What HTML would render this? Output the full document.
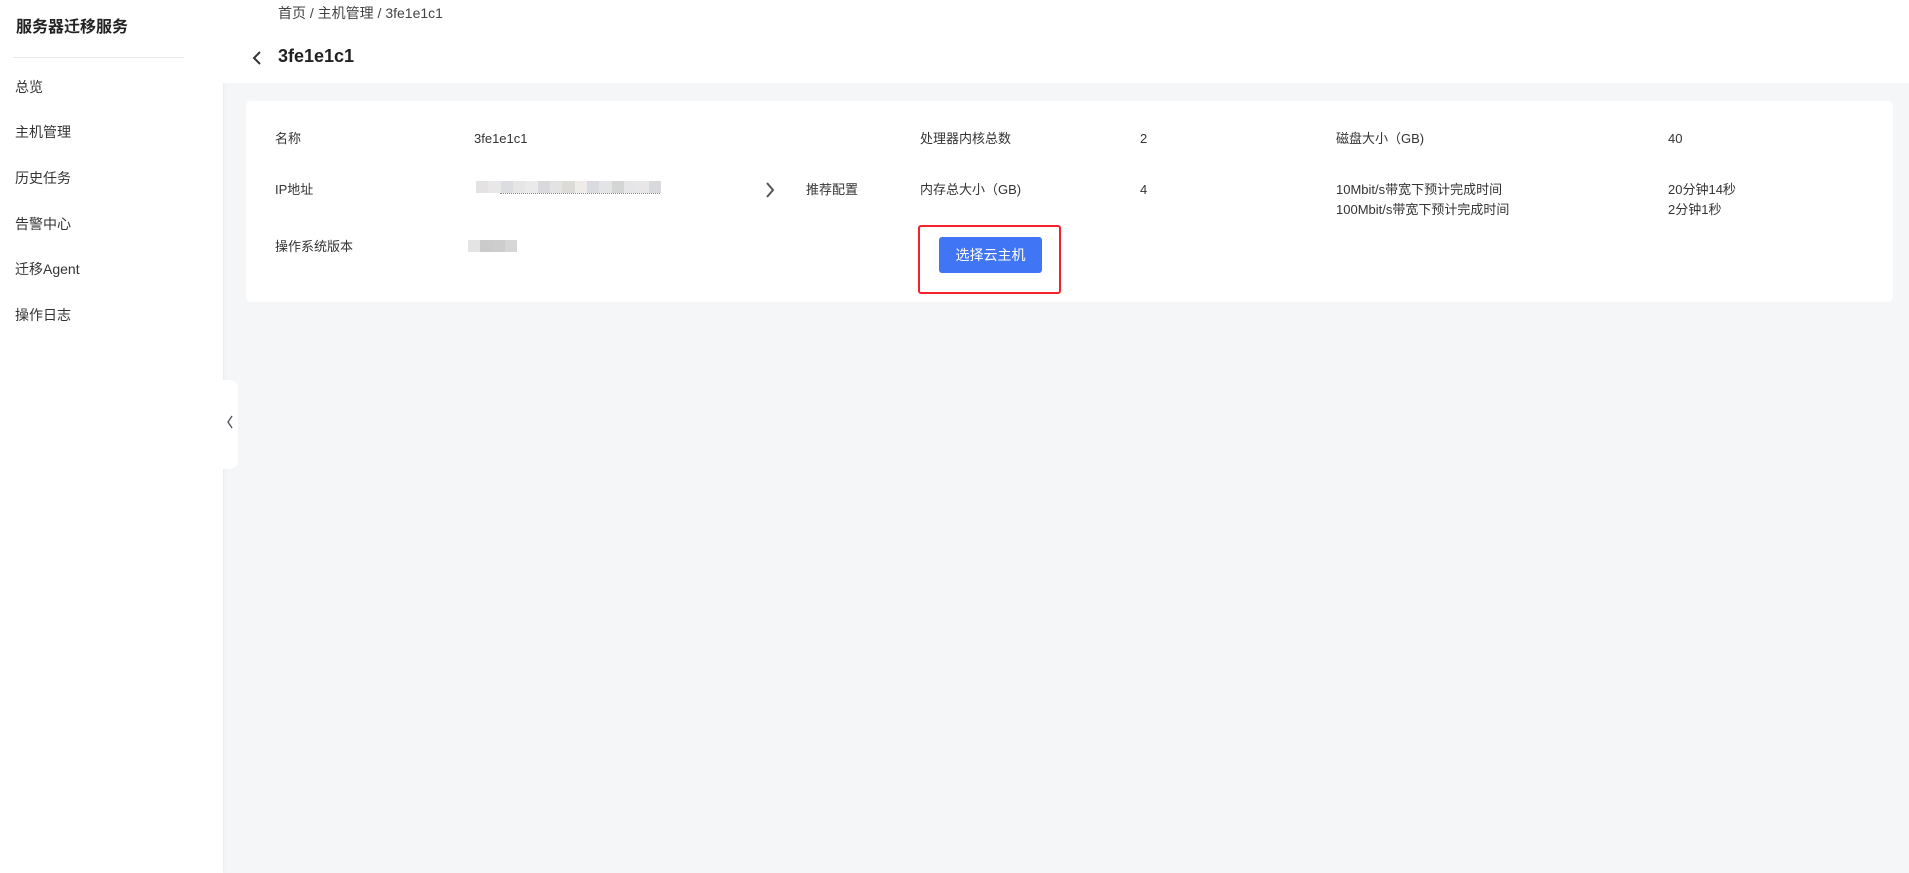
<!DOCTYPE html>
<html><head><meta charset="utf-8"><style>
*{margin:0;padding:0;box-sizing:border-box}
body{width:1909px;height:873px;background:#f5f6f8;font-family:"Liberation Sans","Noto Sans CJK SC",sans-serif;color:#333;font-size:13px;position:relative;overflow:hidden}
.t{position:absolute;line-height:18px;white-space:nowrap}
.side{position:absolute;left:0;top:0;width:223px;height:873px;background:#fff;box-shadow:1px 0 4px rgba(0,0,0,.05)}
.side .title{left:16px;top:17px;font-size:16px;font-weight:bold;color:#222;line-height:22px}
.div{position:absolute;left:13px;top:57px;width:171px;height:1px;background:#e6e6ea}
.menu{left:15px;font-size:14px;color:#333}
.tab{position:absolute;left:223px;top:380px;width:15px;height:89px;background:#fff;border-radius:0 8px 8px 0}
.head{position:absolute;left:223px;top:0;width:1686px;height:83px;background:#fff}
.card{position:absolute;left:246px;top:101px;width:1647px;height:201px;background:#fff;border-radius:5px}
.btn{position:absolute;left:939px;top:237px;width:103px;height:36px;background:#4076f6;border-radius:3px;color:#fff;font-size:14px;text-align:center;line-height:36px}
.red{position:absolute;left:918px;top:225px;width:143px;height:69px;border:2px solid #f5222d;border-radius:3px}
.pix{position:absolute;display:flex}
.pix i{display:block;height:100%;flex:1}
</style></head><body>
<div class="side">
<div class="t title">服务器迁移服务</div>
<div class="div"></div>
<div class="t menu" style="top:78px">总览</div>
<div class="t menu" style="top:123px">主机管理</div>
<div class="t menu" style="top:169px">历史任务</div>
<div class="t menu" style="top:215px">告警中心</div>
<div class="t menu" style="top:260px">迁移Agent</div>
<div class="t menu" style="top:306px">操作日志</div>
</div>
<div class="tab"><svg width="15" height="89"><path d="M9 36 L5 42 L9 48" stroke="#556" stroke-width="1.4" fill="none"/></svg></div>
<div class="head">
<div class="t" style="left:55px;top:4px;font-size:14px;color:#444">首页 / 主机管理 / 3fe1e1c1</div>
<svg class="t" style="left:28px;top:50px" width="12" height="16"><path d="M9 2 L3 8 L9 14" stroke="#333" stroke-width="2" fill="none"/></svg>
<div class="t" style="left:55px;top:45px;font-size:18px;font-weight:bold;color:#222;line-height:22px">3fe1e1c1</div>
</div>
<div class="card"></div>
<div class="t" style="left:275px;top:130px">名称</div>
<div class="t" style="left:474px;top:130px">3fe1e1c1</div>
<div class="t" style="left:275px;top:181px">IP地址</div>
<div class="pix" style="left:476px;top:181px;width:185px;height:12px"><i style="background:#e4e2e2"></i><i style="background:#e8e8e8"></i><i style="background:#dcdde0"></i><i style="background:#e6e6e6"></i><i style="background:#eaeaea"></i><i style="background:#d8d9dc"></i><i style="background:#e3e3e3"></i><i style="background:#dddbd8"></i><i style="background:#eeebe8"></i><i style="background:#dadbe0"></i><i style="background:#e4e4e6"></i><i style="background:#d4d6d6"></i><i style="background:#e6e6e8"></i><i style="background:#e8e6e6"></i><i style="background:#d8d9dc"></i></div>
<div style="position:absolute;left:500px;top:193px;width:160px;height:1px;border-top:1px dotted #888"></div>
<svg class="t" style="left:764px;top:181px" width="12" height="18"><path d="M3 2 L9 9 L3 16" stroke="#555" stroke-width="2" fill="none"/></svg>
<div class="t" style="left:806px;top:181px">推荐配置</div>
<div class="t" style="left:275px;top:238px">操作系统版本</div>
<div class="pix" style="left:468px;top:240px;width:49px;height:12px"><i style="background:#e4e4e4"></i><i style="background:#cbcbcb"></i><i style="background:#cdcdcd"></i><i style="background:#d6d6d8"></i></div>
<div class="t" style="left:920px;top:130px">处理器内核总数</div>
<div class="t" style="left:1140px;top:130px">2</div>
<div class="t" style="left:920px;top:181px">内存总大小（GB)</div>
<div class="t" style="left:1140px;top:181px">4</div>
<div class="t" style="left:1336px;top:130px">磁盘大小（GB)</div>
<div class="t" style="left:1668px;top:130px">40</div>
<div class="t" style="left:1336px;top:181px">10Mbit/s带宽下预计完成时间</div>
<div class="t" style="left:1336px;top:201px">100Mbit/s带宽下预计完成时间</div>
<div class="t" style="left:1668px;top:181px">20分钟14秒</div>
<div class="t" style="left:1668px;top:201px">2分钟1秒</div>
<div class="btn">选择云主机</div>
<div class="red"></div>
</body></html>
